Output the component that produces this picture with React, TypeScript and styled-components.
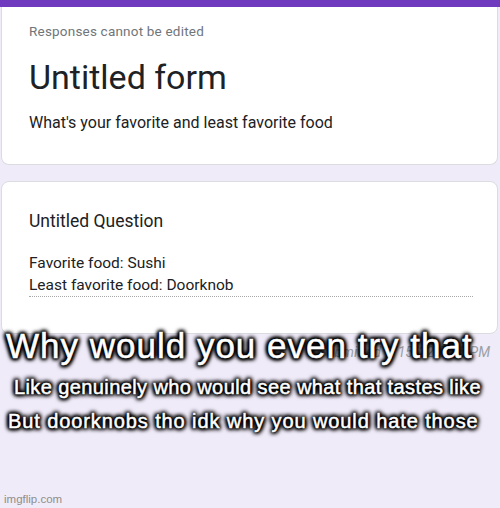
import React from 'react';
import styled, { createGlobalStyle } from 'styled-components';

const GlobalStyle = createGlobalStyle`
  html, body {
    margin: 0;
    padding: 0;
    background: #f0ebf8;
  }
`;

const Page = styled.div`
  position: relative;
  width: 500px;
  height: 508px;
  overflow: hidden;
  background: #f0ebf8;
  font-family: Roboto, "Noto Sans", Arial, sans-serif;
  box-sizing: border-box;
  display: flex;
  flex-direction: column;
  gap: 16px;
`;

const Card = styled.div<{ $top?: boolean }>`
  background: #fff;
  border: 1px solid #dadce0;
  border-top: ${p => (p.$top ? '7px solid #6f3abd' : '1px solid #dadce0')};
  border-radius: ${p => (p.$top ? '0 0 8px 8px' : '8px')};
  margin: 0 2px 0 1px;
  padding: 0 26px 0 27px;
  box-sizing: border-box;
  height: ${p => (p.$top ? '165px' : '153px')};
  display: flex;
  flex-direction: column;
`;

const TopStripe = styled.div`
  height: 7px;
  margin: 0 -2px -7px -1px;
  background: #6f3abd;
  position: relative;
  z-index: 1;
`;

const Notice = styled.div`
  font-size: 13.5px;
  color: #70757a;
  padding-top: 15px;
  line-height: 18px;
  letter-spacing: 0.2px;
`;

const Title = styled.h1`
  margin: 17px 0 0;
  font-size: 34px;
  font-weight: 400;
  line-height: 40px;
  color: #202124;
`;

const Description = styled.p`
  margin: 15px 0 0;
  font-size: 16px;
  line-height: 22px;
  color: #202124;
`;

const Question = styled.div`
  margin-top: 27px;
  font-size: 17.5px;
  line-height: 24px;
  color: #202124;
`;

const Answer = styled.div`
  margin-top: 19px;
  width: 444px;
  font-size: 15.5px;
  line-height: 22px;
  color: #202124;
  padding-bottom: 0;
  border-bottom: 1px dotted #a8a8a8;
`;

const Submitted = styled.div`
  position: absolute;
  right: 10px;
  top: 344px;
  font-size: 14px;
  font-style: italic;
  color: #9aa0a6;
`;

const Captions = styled.div`
  position: absolute;
  left: 0;
  right: 0;
  top: 328px;
  display: flex;
  flex-direction: column;
  gap: 14px;
`;

const Caption = styled.div<{ $size: number; $indent: number; $spacing: number }>`
  padding-left: ${p => p.$indent}px;
  font-family: "Liberation Sans", Arial, sans-serif;
  font-size: ${p => p.$size}px;
  letter-spacing: ${p => p.$spacing}px;
  line-height: 1;
  color: #fff;
  white-space: nowrap;
  -webkit-text-stroke: 0.5px #fff;
  text-shadow:
    0 0 1px #000,
    0 0 2px #000,
    0 0 3px #000,
    0 0 4px #000,
    0 0 5px #000,
    0 0 6px #000,
    1px 1px 4px #000,
    -1px -1px 4px #000,
    1px -1px 4px #000,
    -1px 1px 4px #000;
`;

const Watermark = styled.div`
  position: absolute;
  left: 4px;
  bottom: 3px;
  font-family: "Liberation Sans", Arial, sans-serif;
  font-size: 11.5px;
  color: #8e8e8e;
`;

export default function App() {
  return (
    <>
      <GlobalStyle />
      <Page>
        <div>
          <TopStripe />
          <Card $top>
            <Notice>Responses cannot be edited</Notice>
            <Title>Untitled form</Title>
            <Description>What's your favorite and least favorite food</Description>
          </Card>
        </div>
        <Card>
          <Question>Untitled Question</Question>
          <Answer>
            Favorite food: Sushi
            <br />
            Least favorite food: Doorknob
          </Answer>
        </Card>
        <Submitted>Submitted 9/15/22, 7:45 PM</Submitted>
        <Captions>
          <Caption $size={35} $indent={6} $spacing={1}>Why would you even try that</Caption>
          <Caption $size={20} $indent={14} $spacing={0.4}>Like genuinely who would see what that tastes like</Caption>
          <Caption $size={20} $indent={8} $spacing={0.9}>But doorknobs tho idk why you would hate those</Caption>
        </Captions>
        <Watermark>imgflip.com</Watermark>
      </Page>
    </>
  );
}
